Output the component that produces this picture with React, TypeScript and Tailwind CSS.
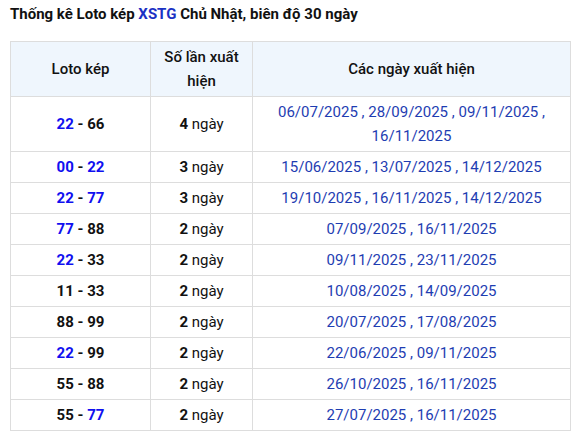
import React from "react";

type Row = { a: string; aBlue: boolean; b: string; bBlue: boolean; n: number; dates: string[] };

const rows: Row[] = [
  { a: "22", aBlue: true, b: "66", bBlue: false, n: 4, dates: ["06/07/2025", "28/09/2025", "09/11/2025", "16/11/2025"] },
  { a: "00", aBlue: true, b: "22", bBlue: true, n: 3, dates: ["15/06/2025", "13/07/2025", "14/12/2025"] },
  { a: "22", aBlue: true, b: "77", bBlue: true, n: 3, dates: ["19/10/2025", "16/11/2025", "14/12/2025"] },
  { a: "77", aBlue: true, b: "88", bBlue: false, n: 2, dates: ["07/09/2025", "16/11/2025"] },
  { a: "22", aBlue: true, b: "33", bBlue: false, n: 2, dates: ["09/11/2025", "23/11/2025"] },
  { a: "11", aBlue: false, b: "33", bBlue: false, n: 2, dates: ["10/08/2025", "14/09/2025"] },
  { a: "88", aBlue: false, b: "99", bBlue: false, n: 2, dates: ["20/07/2025", "17/08/2025"] },
  { a: "22", aBlue: true, b: "99", bBlue: false, n: 2, dates: ["22/06/2025", "09/11/2025"] },
  { a: "55", aBlue: false, b: "88", bBlue: false, n: 2, dates: ["26/10/2025", "16/11/2025"] },
  { a: "55", aBlue: false, b: "77", bBlue: true, n: 2, dates: ["27/07/2025", "16/11/2025"] },
];

const td = "border border-[#dddddd] px-[6px] py-[3px] text-center align-middle";

export default function App() {
  return (
    <div className="bg-white w-[581px] h-[434px] overflow-hidden text-[#111111]" style={{ fontFamily: "Roboto, 'Noto Sans', sans-serif" }}>
      <div className="pl-[10px] pt-[4px] h-[41px] text-[15px] font-bold leading-[20px]">
        Thống kê Loto kép <span className="text-[#1a31c4]">XSTG</span> Chủ Nhật, biên độ 30 ngày
      </div>
      <table className="ml-[10px] w-[561px] border-collapse text-[15px] leading-[24px] table-fixed">
        <colgroup>
          <col className="w-[140px]" />
          <col className="w-[102px]" />
          <col />
        </colgroup>
        <thead>
          <tr className="bg-[#eff6fd]">
            <th className={td + " font-medium"}>Loto kép</th>
            <th className={td + " font-medium"}>Số lần xuất hiện</th>
            <th className={td + " font-medium"}>Các ngày xuất hiện</th>
          </tr>
        </thead>
        <tbody>
          {rows.map((r, i) => (
            <tr key={i}>
              <td className={td + " font-bold"}>
                <span className={r.aBlue ? "text-[#1010f0]" : ""}>{r.a}</span>
                {" - "}
                <span className={r.bBlue ? "text-[#1010f0]" : ""}>{r.b}</span>
              </td>
              <td className={td}>
                <span className="font-bold">{r.n}</span> ngày
              </td>
              <td className={td + " text-[#1e3db2]"}>
                {r.dates.map((d, j) => (
                  <React.Fragment key={j}>
                    {d}
                    {j < r.dates.length - 1 ? " , " : ""}
                  </React.Fragment>
                ))}
              </td>
            </tr>
          ))}
        </tbody>
      </table>
    </div>
  );
}
